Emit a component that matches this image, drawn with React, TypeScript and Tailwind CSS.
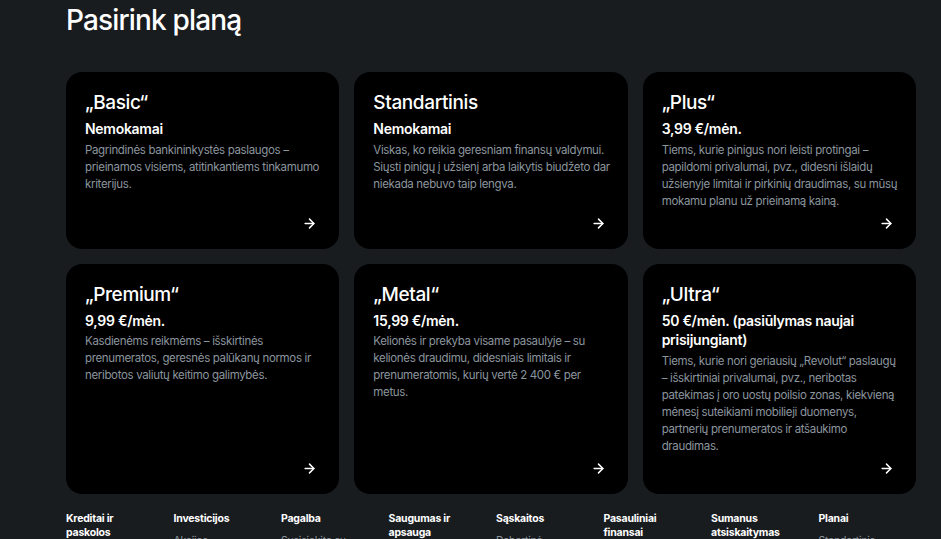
import { ArrowRight } from 'lucide-react';

const plans = [
  { name: '„Basic“', price: 'Nemokamai', desc: 'Pagrindinės bankininkystės paslaugos – prieinamos visiems, atitinkantiems tinkamumo kriterijus.' },
  { name: 'Standartinis', price: 'Nemokamai', desc: 'Viskas, ko reikia geresniam finansų valdymui. Siųsti pinigų į užsienį arba laikytis biudžeto dar niekada nebuvo taip lengva.' },
  { name: '„Plus“', price: '3,99 €/mėn.', desc: 'Tiems, kurie pinigus nori leisti protingai – papildomi privalumai, pvz., didesni išlaidų užsienyje limitai ir pirkinių draudimas, su mūsų mokamu planu už prieinamą kainą.' },
  { name: '„Premium“', price: '9,99 €/mėn.', desc: 'Kasdienėms reikmėms – išskirtinės prenumeratos, geresnės palūkanų normos ir neribotos valiutų keitimo galimybės.' },
  { name: '„Metal“', price: '15,99 €/mėn.', desc: 'Kelionės ir prekyba visame pasaulyje – su kelionės draudimu, didesniais limitais ir prenumeratomis, kurių vertė 2 400 € per metus.' },
  { name: '„Ultra“', price: '50 €/mėn. (pasiūlymas naujai prisijungiant)', desc: 'Tiems, kurie nori geriausių „Revolut“ paslaugų – išskirtiniai privalumai, pvz., neribotas patekimas į oro uostų poilsio zonas, kiekvieną mėnesį suteikiami mobilieji duomenys, partnerių prenumeratos ir atšaukimo draudimas.' },
];

const footer = [
  { title: 'Kreditai ir paskolos', links: ['Asmeninės paskolos', 'Kredito kortelės'] },
  { title: 'Investicijos', links: ['Akcijos', 'Kriptovaliutos'] },
  { title: 'Pagalba', links: ['Susisiekite su mumis', 'DUK'] },
  { title: 'Saugumas ir apsauga', links: ['Saugumas', 'Sukčiavimas'] },
  { title: 'Sąskaitos', links: ['Dabartinė sąskaita', 'Vaikų sąskaita'] },
  { title: 'Pasauliniai finansai', links: ['Pinigų siuntimas', 'Valiutų keitimas'] },
  { title: 'Sumanus atsiskaitymas', links: ['Mokėjimai', 'Kortelės'] },
  { title: 'Planai', links: ['Standartinis', '„Plus“'] },
];

function PlanCard({ name, price, desc }: { name: string; price: string; desc: string }) {
  return (
    <div className="flex flex-col rounded-[16px] bg-black pl-[19px] pr-[16px] pt-[19px] pb-[18px]">
      <h2 className="text-[19px] leading-[24px] font-medium text-white tracking-[-0.02em]">{name}</h2>
      <div className="mt-[4px] text-[14px] leading-[19.5px] font-semibold text-white tracking-[-0.02em]">{price}</div>
      <p className="mt-[3px] text-[11.5px] leading-[17px] text-[#8b959e] tracking-[-0.03em]">{desc}</p>
      <div className="mt-auto flex justify-end pt-[6px] pr-[6px]">
        <ArrowRight size={15} strokeWidth={2.4} className="text-white" />
      </div>
    </div>
  );
}

export default function App() {
  return (
    <div className="h-[539px] overflow-hidden bg-[#191c1f]" style={{ fontFamily: 'Inter, "Noto Sans", sans-serif' }}>
      <div className="ml-[66px] w-[850px] pt-[2px]">
        <h1 className="text-[28px] leading-[36px] font-medium text-white tracking-[-0.03em]">Pasirink planą</h1>
        <div className="mt-[34px] grid grid-cols-3 gap-x-[15px] gap-y-[15px]">
          {plans.map(p => <PlanCard key={p.name} {...p} />)}
        </div>
        <div className="mt-[18px] grid grid-cols-[repeat(8,85px)] gap-x-[22.5px]">
          {footer.map(col => (
            <div key={col.title}>
              <div className="text-[10.5px] leading-[14px] font-bold text-white tracking-[-0.02em]">{col.title}</div>
              <ul className="mt-[8px] flex flex-col gap-[6px]">
                {col.links.map(l => <li key={l} className="text-[10.5px] leading-[14px] text-[#8b959e] tracking-[-0.02em]">{l}</li>)}
              </ul>
            </div>
          ))}
        </div>
      </div>
    </div>
  );
}
